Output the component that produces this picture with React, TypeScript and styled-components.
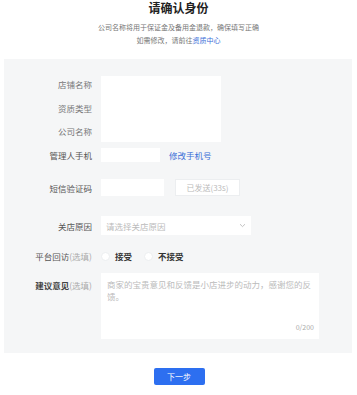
import React from "react";
import styled, { createGlobalStyle } from "styled-components";

const Global = createGlobalStyle`
  html, body { margin: 0; padding: 0; background: #ffffff; }
  body {
    font-family: "Noto Sans CJK SC", "Noto Sans", "Liberation Sans", sans-serif;
    width: 357px;
  }
  * { box-sizing: border-box; }
`;

const Page = styled.div`
  width: 357px;
  display: flex;
  flex-direction: column;
  align-items: stretch;
`;

const Header = styled.header`
  display: flex;
  flex-direction: column;
  align-items: center;
`;

const Title = styled.h1`
  margin: 0;
  font-size: 12px;
  line-height: 16px;
  font-weight: 700;
  color: #222;
`;

const Sub = styled.p`
  margin: 5px 0 0;
  font-size: 7px;
  line-height: 13px;
  color: #777;
  text-align: center;
`;

const Link = styled.a`
  color: #3a6fd8;
  text-decoration: none;
  cursor: pointer;
`;

const Panel = styled.section`
  margin: 12px 5px 0 4px;
  background: #f5f6f7;
  padding: 17px 0 14px;
  display: grid;
  grid-template-columns: 88px 1fr;
  column-gap: 9px;
  align-items: center;
`;

const Label = styled.div<{ $tone?: "light" | "dark" }>`
  text-align: right;
  font-size: 8.5px;
  line-height: 10px;
  white-space: nowrap;
  color: ${(p) => (p.$tone === "light" ? "#777" : "#555")};
`;

const Strong = styled.span`
  color: #444;
  font-weight: 600;
`;

const Optional = styled.span`
  color: #aaa;
`;

const LabelStack = styled.div`
  display: flex;
  flex-direction: column;
  align-items: stretch;
  padding-top: 3px;
  gap: 13.5px;
  align-self: start;
`;

const InfoBox = styled.div`
  width: 120px;
  height: 66px;
  background: #fff;
`;

const Control = styled.div<{ $mt: number }>`
  display: flex;
  align-items: center;
  gap: 9px;
  margin-top: ${(p) => p.$mt}px;
`;

const RowLabel = styled(Label)<{ $mt: number; $top?: boolean }>`
  margin-top: ${(p) => p.$mt}px;
  align-self: ${(p) => (p.$top ? "start" : "center")};
  padding-top: ${(p) => (p.$top ? "7px" : "0")};
`;

const Input = styled.div<{ $w: number; $h: number }>`
  width: ${(p) => p.$w}px;
  height: ${(p) => p.$h}px;
  background: #fff;
`;

const TextLink = styled(Link)`
  font-size: 8.5px;
  line-height: 10px;
`;

const SendBtn = styled.button`
  width: 65px;
  height: 17px;
  margin-left: 2px;
  border: 1px solid #eceef0;
  background: #fff;
  color: #bbb;
  font-family: inherit;
  font-size: 8px;
  padding: 0;
`;

const Select = styled.div`
  width: 150px;
  height: 19px;
  background: #fff;
  display: flex;
  align-items: center;
  justify-content: space-between;
  padding: 0 5px 0 5px;
  font-size: 8.5px;
  color: #bbb;
`;

const Radios = styled.div`
  display: flex;
  align-items: center;
  gap: 12px;
  height: 14px;
`;

const RadioItem = styled.label`
  display: flex;
  align-items: center;
  gap: 5px;
  font-size: 8.5px;
  font-weight: 600;
  color: #333;
`;

const Circle = styled.span`
  width: 9px;
  height: 9px;
  border-radius: 50%;
  background: #fff;
  border: 1px solid #eceef0;
`;

const TextArea = styled.div`
  position: relative;
  width: 218px;
  height: 66px;
  background: #fff;
  padding: 5px 6px;
  font-size: 8.5px;
  line-height: 12px;
  color: #bbb;
`;

const Counter = styled.span`
  position: absolute;
  right: 5px;
  bottom: 6px;
  font-size: 7px;
  color: #aaa;
`;

const Footer = styled.div`
  display: flex;
  justify-content: center;
  padding: 15px 0 0 1px;
`;

const Primary = styled.button`
  width: 51px;
  height: 17px;
  border: none;
  border-radius: 2px;
  background: #2d6ff0;
  color: #fff;
  font-family: inherit;
  font-size: 8px;
  padding: 0;
`;

const Chevron = () => (
  <svg width="7" height="5" viewBox="0 0 7 5">
    <path d="M1 1.2 L3.5 3.6 L6 1.2" fill="none" stroke="#bbb" strokeWidth="0.9" />
  </svg>
);

export default function App() {
  return (
    <Page>
      <Global />
      <Header>
        <Title>请确认身份</Title>
        <Sub>
          公司名称将用于保证金及备用金退款，确保填写正确
          <br />
          如需修改，请前往<Link>资质中心</Link>
        </Sub>
      </Header>
      <Panel>
        <LabelStack>
          <Label $tone="light">店铺名称</Label>
          <Label $tone="light">资质类型</Label>
          <Label $tone="light">公司名称</Label>
        </LabelStack>
        <InfoBox />

        <RowLabel $mt={6}>管理人手机</RowLabel>
        <Control $mt={6}>
          <Input $w={59} $h={14} />
          <TextLink>修改手机号</TextLink>
        </Control>

        <RowLabel $mt={17}>短信验证码</RowLabel>
        <Control $mt={17}>
          <Input $w={63} $h={17} />
          <SendBtn>已发送(33s)</SendBtn>
        </Control>

        <RowLabel $mt={20}>关店原因</RowLabel>
        <Control $mt={20}>
          <Select>
            <span>请选择关店原因</span>
            <Chevron />
          </Select>
        </Control>

        <RowLabel $mt={14}>
          平台回访<Optional>(选填)</Optional>
        </RowLabel>
        <Control $mt={14}>
          <Radios>
            <RadioItem>
              <Circle />
              接受
            </RadioItem>
            <RadioItem>
              <Circle />
              不接受
            </RadioItem>
          </Radios>
        </Control>

        <RowLabel $mt={10} $top>
          <Strong>建议意见</Strong>
          <Optional>(选填)</Optional>
        </RowLabel>
        <Control $mt={10}>
          <TextArea>
            商家的宝贵意见和反馈是小店进步的动力，感谢您的反馈。
            <Counter>0/200</Counter>
          </TextArea>
        </Control>
      </Panel>
      <Footer>
        <Primary>下一步</Primary>
      </Footer>
    </Page>
  );
}
